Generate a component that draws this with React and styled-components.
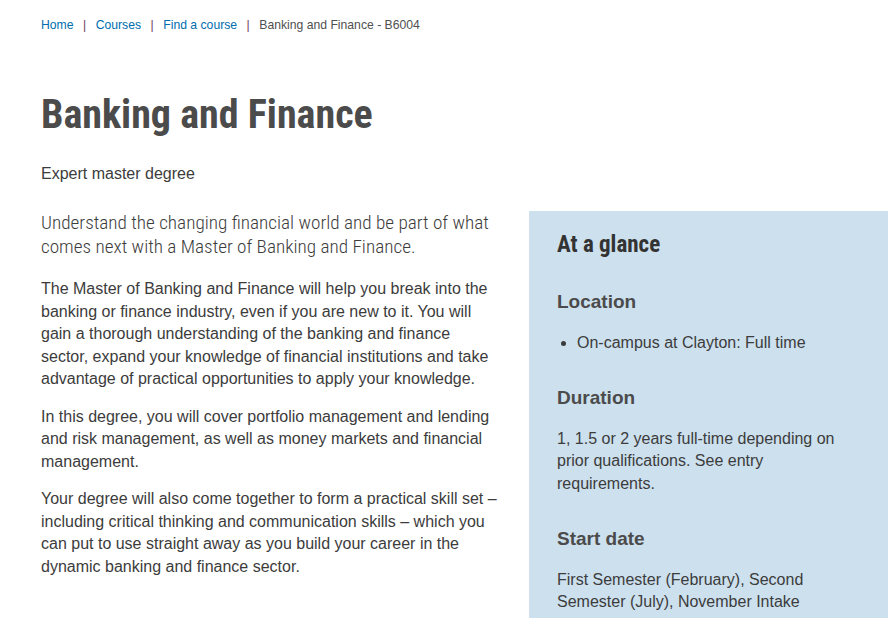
import React from "react";
import styled, { createGlobalStyle } from "styled-components";

const GlobalStyle = createGlobalStyle`
  html, body { margin: 0; padding: 0; background: #ffffff; }
  body { font-family: "Liberation Sans", Arial, sans-serif; color: #3c3c3c; }
  * { box-sizing: border-box; }
`;

const Page = styled.div`
  padding: 0 2px 0 41px;
  width: 890px;
  height: 618px;
  overflow: hidden;
`;

const Breadcrumb = styled.nav`
  display: flex;
  align-items: center;
  padding-top: 16px;
  font-size: 12.2px;
  line-height: 18px;
  color: #505050;
`;

const Crumb = styled.a`
  color: #006dae;
  text-decoration: none;
`;

const Sep = styled.span`
  color: #6e3b5e;
  margin: 0 9.5px;
`;

const Title = styled.h1`
  margin: 58px 0 0;
  font-family: "Roboto Condensed", Roboto, sans-serif;
  font-stretch: condensed;
  font-weight: 700;
  font-size: 40px;
  line-height: 46px;
  color: #4b4b4b;
`;

const Subtitle = styled.p`
  margin: 25px 0 0;
  font-size: 16px;
  line-height: 22px;
  color: #3c3c3c;
`;

const Columns = styled.div`
  display: grid;
  grid-template-columns: 460px 359px;
  column-gap: 28px;
  margin-top: 26px;
  align-items: start;
`;

const Main = styled.div`
  display: flex;
  flex-direction: column;
`;

const Intro = styled.p`
  margin: 0;
  font-family: "Roboto Condensed", Roboto, sans-serif;
  font-stretch: condensed;
  font-weight: 300;
  font-size: 19.2px;
  line-height: 24px;
  color: #3c3c3c;
`;

const Para = styled.p`
  margin: ${(p) => (p.$first ? "19px" : "15px")} 0 0;
  font-size: 16px;
  line-height: 22.5px;
  color: #3c3c3c;
`;

const Panel = styled.aside`
  background: #cce0ee;
  padding: 20px 28px 40px;
  min-height: 420px;
`;

const PanelTitle = styled.h2`
  margin: 0;
  font-family: "Roboto Condensed", Roboto, sans-serif;
  font-stretch: condensed;
  font-weight: 700;
  font-size: 23px;
  line-height: 27px;
  color: #333333;
`;

const SectionTitle = styled.h3`
  margin: 32px 0 17.5px;
  font-size: 19px;
  line-height: 24px;
  font-weight: 700;
  color: #4b4b4b;
`;

const List = styled.ul`
  margin: 0;
  padding-left: 20px;
  font-size: 16px;
  line-height: 22.5px;
  color: #3c3c3c;
`;

const Text = styled.p`
  margin: 0;
  font-size: 16px;
  line-height: 22.5px;
  color: #3c3c3c;
`;

export default function App() {
  return (
    <>
      <GlobalStyle />
      <Page>
        <Breadcrumb>
          <Crumb href="#">Home</Crumb>
          <Sep>|</Sep>
          <Crumb href="#">Courses</Crumb>
          <Sep>|</Sep>
          <Crumb href="#">Find a course</Crumb>
          <Sep>|</Sep>
          <span>Banking and Finance - B6004</span>
        </Breadcrumb>
        <Title>Banking and Finance</Title>
        <Subtitle>Expert master degree</Subtitle>
        <Columns>
          <Main>
            <Intro>
              Understand the changing financial world and be part of what comes next with a
              Master of Banking and Finance.
            </Intro>
            <Para $first>
              The Master of Banking and Finance will help you break into the banking or finance
              industry, even if you are new to it. You will gain a thorough understanding of the
              banking and finance sector, expand your knowledge of financial institutions and take
              advantage of practical opportunities to apply your knowledge.
            </Para>
            <Para>
              In this degree, you will cover portfolio management and lending and risk management,
              as well as money markets and financial management.
            </Para>
            <Para>
              Your degree will also come together to form a practical skill set – including
              critical thinking and communication skills – which you can put to use straight away
              as you build your career in the dynamic banking and finance sector.
            </Para>
          </Main>
          <Panel>
            <PanelTitle>At a glance</PanelTitle>
            <SectionTitle>Location</SectionTitle>
            <List>
              <li>On-campus at Clayton: Full time</li>
            </List>
            <SectionTitle>Duration</SectionTitle>
            <Text>
              1, 1.5 or 2 years full-time depending on prior qualifications. See entry
              requirements.
            </Text>
            <SectionTitle>Start date</SectionTitle>
            <Text>First Semester (February), Second Semester (July), November Intake</Text>
          </Panel>
        </Columns>
      </Page>
    </>
  );
}
